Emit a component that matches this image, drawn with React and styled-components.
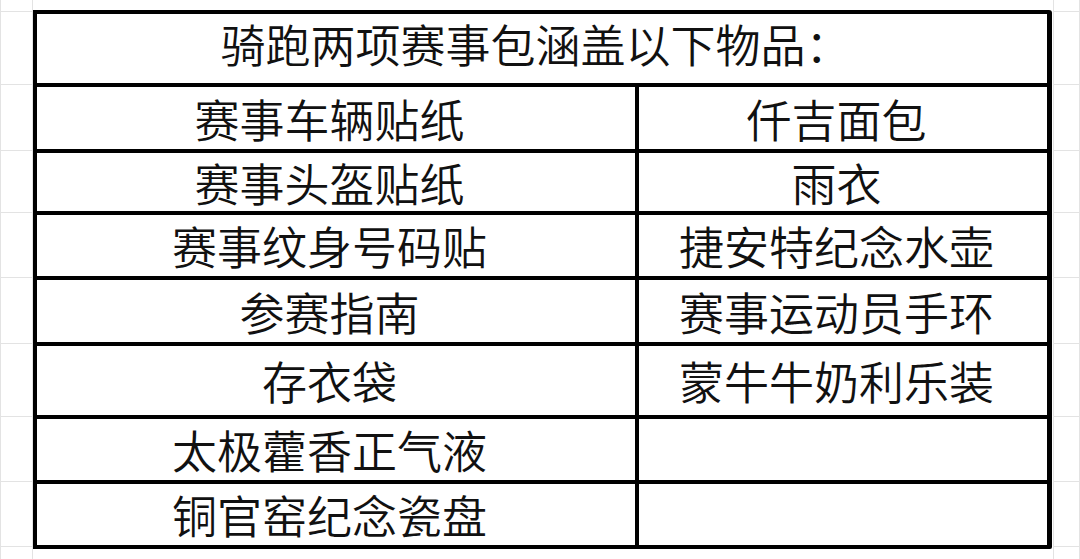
import React from "react";
import styled, { createGlobalStyle } from "styled-components";

const GlobalStyle = createGlobalStyle`
  html, body {
    margin: 0;
    padding: 0;
    background: #ffffff;
  }
  body {
    width: 1080px;
    height: 559px;
    overflow: hidden;
    font-family: "Noto Sans CJK SC", "Noto Sans", sans-serif;
  }
  * { box-sizing: border-box; }
`;

const Sheet = styled.div`
  display: flex;
  align-items: flex-start;
  width: 1080px;
  height: 559px;
`;

const Gutter = styled.div`
  display: flex;
  flex-direction: column;
  width: ${(p) => p.$width}px;
  height: 559px;
  border-left: 1px solid #e3e3e3;
  border-right: 1px solid #e3e3e3;
  margin-left: ${(p) => p.$offset || 0}px;
`;

const GutterCell = styled.div`
  height: ${(p) => p.$h}px;
  flex: none;
  border-bottom: 1px solid #e3e3e3;
`;

const Table = styled.div`
  margin-top: 10px;
  display: grid;
  grid-template-columns: 598px 408px;
  grid-template-rows: ${(p) => p.$rows};
  gap: 4px;
  padding: 4px 5px 4px 4px;
  background: #000;
  border-top-right-radius: 3px;
  border-bottom-right-radius: 2px;
`;

const Cell = styled.div`
  background: #fff;
  display: flex;
  align-items: center;
  justify-content: center;
  padding: 0 13px 0 0;
  font-size: 45px;
  line-height: 1;
  font-weight: 350;
  color: #111;
  white-space: nowrap;
`;

const HeaderCell = styled(Cell)`
  grid-column: 1 / span 2;
  padding-bottom: 10px;
`;

const header = { h: 69, text: "骑跑两项赛事包涵盖以下物品：" };

const rows = [
  { h: 62, a: "赛事车辆贴纸", b: "仟吉面包" },
  { h: 58, a: "赛事头盔贴纸", b: "雨衣" },
  { h: 61, a: "赛事纹身号码贴", b: "捷安特纪念水壶" },
  { h: 62, a: "参赛指南", b: "赛事运动员手环" },
  { h: 69, a: "存衣袋", b: "蒙牛牛奶利乐装" },
  { h: 61, a: "太极藿香正气液", b: "" },
  { h: 61, a: "铜官窑纪念瓷盘", b: "" },
];

const gutterLines = [12, 85, 151, 213, 278, 344, 417, 482, 547];
const gutterHeights = gutterLines.map((y, i) => (i === 0 ? y : y - gutterLines[i - 1]));

function SideGutter({ width, offset }) {
  return (
    <Gutter $width={width} $offset={offset}>
      {gutterHeights.map((h, i) => (
        <GutterCell key={i} $h={h} />
      ))}
    </Gutter>
  );
}

export default function App() {
  const template = [header.h, ...rows.map((r) => r.h)].map((h) => `${h}px`).join(" ");
  return (
    <>
      <GlobalStyle />
      <Sheet>
        <SideGutter width={33} />
        <Table $rows={template}>
          <HeaderCell>{header.text}</HeaderCell>
          {rows.map((r, i) => (
            <React.Fragment key={i}>
              <Cell>{r.a}</Cell>
              <Cell>{r.b}</Cell>
            </React.Fragment>
          ))}
        </Table>
        <SideGutter width={27} offset={1} />
      </Sheet>
    </>
  );
}
